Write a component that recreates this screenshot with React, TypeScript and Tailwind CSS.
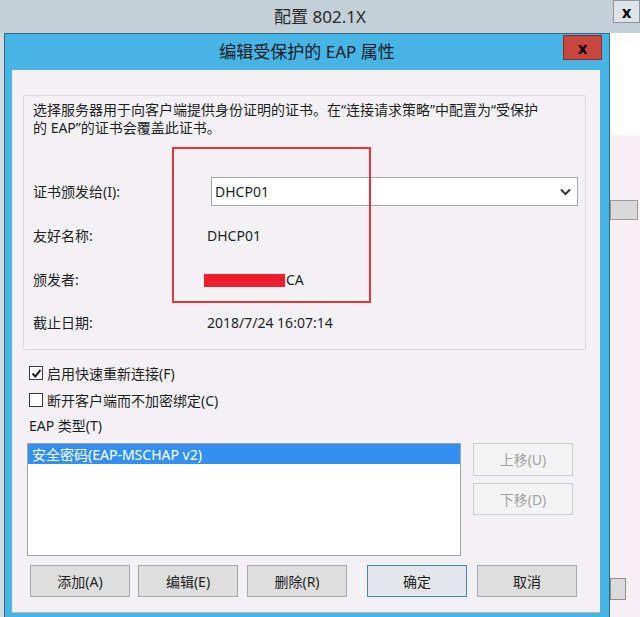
import React from "react"

const font = { fontFamily: '"Noto Sans", "Noto Sans CJK SC", sans-serif' }

const Btn = ({ label, className = "", primary = false, disabled = false }: any) => (
  <div
    className={
      "flex h-[32px] w-[100px] items-center justify-center border text-[14px] " +
      (disabled
        ? "border-[#cdcdcd] bg-[#f3f3f3] text-[#a2a2a2] "
        : primary
          ? "border-[#4a86bd] bg-[#e3e7ec] text-[#1e1e1e] "
          : "border-[#a9a9a9] bg-[#dedede] text-[#1e1e1e] ") +
      className
    }
  >
    {label}
  </div>
)

const Check = ({ checked }: { checked?: boolean }) => (
  <div className="flex h-[14px] w-[14px] items-center justify-center border border-[#3a3a3a] bg-white">
    {checked && (
      <svg width="11" height="11" viewBox="0 0 11 11">
        <path d="M1.5 5.5 L4.3 8.5 L9.5 1.8" fill="none" stroke="#1a1a1a" strokeWidth="2" />
      </svg>
    )}
  </div>
)

export default function App() {
  return (
    <div className="relative h-[617px] w-[640px] overflow-hidden bg-[#d3dce0] text-[#1e1e1e]" style={font}>
      {/* outer window title */}
      <div className="relative flex h-[33px] items-center justify-center bg-[#c3d0d7]">
        <span className="text-[17px] text-[#2a2a2a]">配置 802.1X</span>
        <div className="absolute right-0 top-0 flex h-[23px] w-[27px] items-center justify-center border border-[#8c969b] bg-[#dde3e6] text-[16px] font-bold leading-none text-black">
          x
        </div>
      </div>

      <div className="flex h-[584px]">
        <div className="w-[4px] bg-[#d0d9de]" />

        {/* dialog */}
        <div className="flex w-[606px] flex-col border-x border-t border-[#2c6a8c] bg-[#47b4e6]">
          <div className="relative flex h-[36px] items-center justify-center">
            <span className="text-[17px] text-[#1a1a1a]">编辑受保护的 EAP 属性</span>
            <div className="absolute right-[7px] top-[1px] flex h-[25px] w-[39px] items-center justify-center border border-[#8a2e29] bg-[#c8463e] text-[16px] font-bold leading-none text-black">
              x
            </div>
          </div>

          <div className="ml-[7px] mr-[9px] flex h-[543px] flex-col border-b border-[#b8b8b8] bg-[#f4f1f6]">
            {/* group box */}
            <div className="ml-[11px] mt-[25px] h-[255px] w-[563px] rounded-[2px] border border-[#dcd9de] pl-[9px] pt-[5px]">
              <p className="text-[14px] leading-[18px]">
                选择服务器用于向客户端提供身份证明的证书。在“连接请求策略”中配置为“受保护
                <br />
                的 EAP”的证书会覆盖此证书。
              </p>

              <div className="mt-[40px] flex h-[29px] items-center text-[14px]">
                <span className="w-[174px]">证书颁发给(I):</span>
                <div className="ml-[4px] flex h-[29px] w-[367px] items-center justify-between border border-[#a5a5a5] bg-white pl-[3px] pr-[6px]">
                  <span>DHCP01</span>
                  <svg width="11" height="8" viewBox="0 0 11 8">
                    <path d="M1 1.5 L5.5 6 L10 1.5" fill="none" stroke="#333" strokeWidth="2" />
                  </svg>
                </div>
              </div>

              <div className="mt-[15px] flex h-[29px] items-center text-[14px]">
                <span className="w-[174px]">友好名称:</span>
                <span>DHCP01</span>
              </div>

              <div className="mt-[15px] flex h-[29px] items-center text-[14px]">
                <span className="w-[174px]">颁发者:</span>
                <span className="ml-[-3px] mt-[2px] inline-block h-[13px] w-[81px] bg-[#ee1d2a]" />
                <span className="ml-[1px]">CA</span>
              </div>

              <div className="mt-[14px] flex h-[29px] items-center text-[14px]">
                <span className="w-[174px]">截止日期:</span>
                <span>2018/7/24 16:07:14</span>
              </div>
            </div>

            {/* options */}
            <div className="ml-[17px] mt-[13px] flex h-[20px] items-center gap-[4px] text-[14px]">
              <Check checked />
              <span>启用快速重新连接(F)</span>
            </div>
            <div className="ml-[17px] mt-[7px] flex h-[20px] items-center gap-[4px] text-[14px]">
              <Check />
              <span>断开客户端而不加密绑定(C)</span>
            </div>
            <div className="ml-[17px] mt-[5px] flex h-[20px] items-center text-[14px]">EAP 类型(T)</div>

            <div className="ml-[15px] mt-[8px] flex">
              <div className="h-[113px] w-[434px] border border-[#a3a3a3] bg-white">
                <div className="flex h-[20px] items-center bg-[#3390ee] pl-[4px] text-[14px] text-white">
                  安全密码(EAP-MSCHAP v2)
                </div>
              </div>
              <div className="ml-[12px] flex flex-col gap-[7px]">
                <Btn label="上移(U)" disabled className="h-[33px]" />
                <Btn label="下移(D)" disabled />
              </div>
            </div>

            <div className="ml-[18px] mt-[9px] flex">
              <Btn label="添加(A)" />
              <Btn label="编辑(E)" className="ml-[8px]" />
              <Btn label="删除(R)" className="ml-[9px]" />
              <Btn label="确定" primary className="ml-[20px]" />
              <Btn label="取消" className="ml-[10px]" />
            </div>
          </div>
        </div>

        {/* area right of dialog */}
        <div className="flex flex-1 flex-col">
          <div className="h-[102px] bg-white" />
          <div className="flex flex-1 flex-col bg-[#f7eff4]">
            <div className="mt-[65px] h-[20px] w-[28px] border border-[#9a9a9a] bg-[#d9d9d9]" />
            <div className="mt-[358px] h-[22px] w-[16px] border border-[#8f8f8f] bg-[#dadada]" />
          </div>
        </div>
      </div>

      {/* annotation */}
      <div className="pointer-events-none absolute left-[172px] top-[147px] h-[156px] w-[199px] border-2 border-[#e5323d]" />
    </div>
  )
}
